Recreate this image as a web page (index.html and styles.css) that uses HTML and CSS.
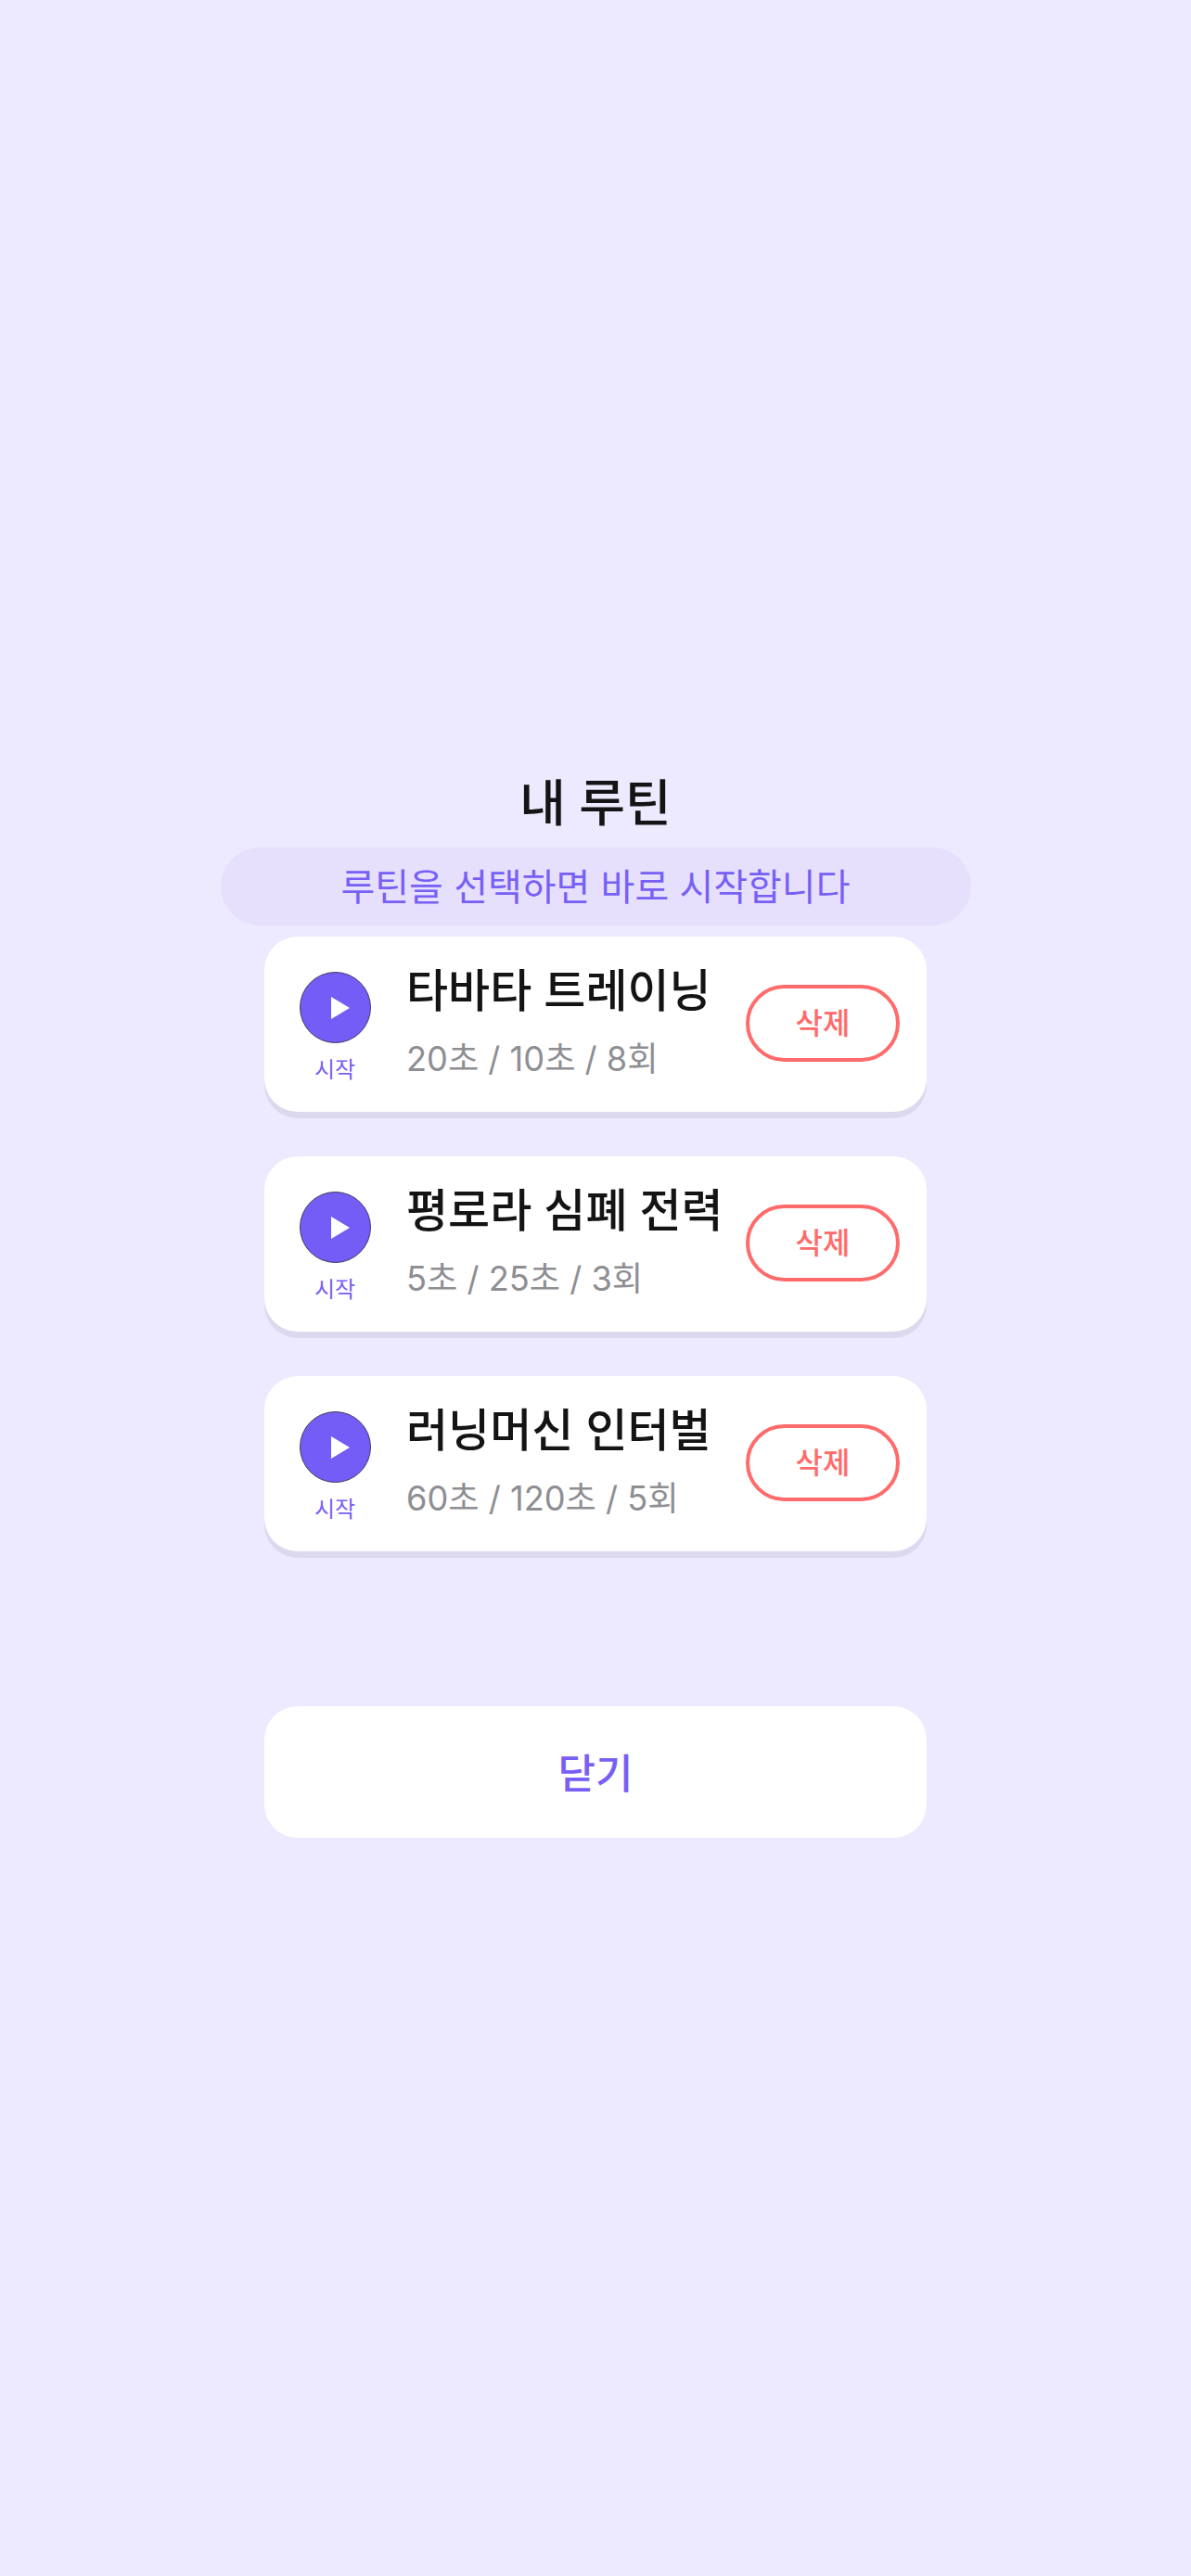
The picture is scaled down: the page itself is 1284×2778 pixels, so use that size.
FILE: index.html
```html
<!DOCTYPE html>
<html lang="ko">
<head>
<meta charset="utf-8">
<title>내 루틴</title>
<link rel="stylesheet" href="styles.css">
</head>
<body>
<main class="sheet">
  <h1 class="title">내 루틴</h1>
  <p class="hint">루틴을 선택하면 바로 시작합니다</p>
  <ul class="list">
    <li class="card">
      <button class="start">
        <span class="disc"><svg class="tri" viewBox="0 0 20 24"><path d="M0 0L20 12L0 24Z"/></svg></span>
        <span class="start-label">시작</span>
      </button>
      <div class="info">
        <div class="name">타바타 트레이닝</div>
        <div class="meta">20초 / 10초 / 8회</div>
      </div>
      <button class="del">삭제</button>
    </li>
    <li class="card">
      <button class="start">
        <span class="disc"><svg class="tri" viewBox="0 0 20 24"><path d="M0 0L20 12L0 24Z"/></svg></span>
        <span class="start-label">시작</span>
      </button>
      <div class="info">
        <div class="name">평로라 심폐 전력</div>
        <div class="meta">5초 / 25초 / 3회</div>
      </div>
      <button class="del">삭제</button>
    </li>
    <li class="card">
      <button class="start">
        <span class="disc"><svg class="tri" viewBox="0 0 20 24"><path d="M0 0L20 12L0 24Z"/></svg></span>
        <span class="start-label">시작</span>
      </button>
      <div class="info">
        <div class="name">러닝머신 인터벌</div>
        <div class="meta">60초 / 120초 / 5회</div>
      </div>
      <button class="del">삭제</button>
    </li>
  </ul>
  <button class="close">닫기</button>
</main>
</body>
</html>
```
FILE: styles.css
```css
* { box-sizing: border-box; }
html, body { margin: 0; padding: 0; }
body {
  width: 1284px;
  height: 2778px;
  background: #ede9fe;
  font-family: "Inter", "Noto Sans CJK KR", sans-serif;
  overflow: hidden;
}
.sheet {
  display: flex;
  flex-direction: column;
  align-items: center;
  padding-top: 828px;
}
.title {
  margin: 0;
  height: 86px;
  line-height: 78px;
  font-size: 54px;
  font-weight: 500;
  color: #141414;
}
.hint {
  margin: 0 0 12px;
  width: 809px;
  height: 84px;
  border-radius: 42px;
  background: #e6e0fd;
  color: #7860f6;
  font-size: 40px;
  line-height: 85px;
  text-align: center;
}
.list {
  list-style: none;
  margin: 0;
  padding: 0;
  display: flex;
  flex-direction: column;
  gap: 48px;
}
.card {
  width: 714px;
  height: 189px;
  background: #fff;
  border-radius: 36px;
  box-shadow: 0 7px 0 #dcd9ee;
  display: flex;
  align-items: center;
  padding: 0 29px 0 38px;
}
button { font-family: inherit; border: 0; background: none; padding: 0; }
.start {
  width: 76px;
  flex: none;
  display: flex;
  flex-direction: column;
  align-items: center;
  gap: 13px;
  margin-top: 9px;
}
.disc {
  width: 77px;
  height: 77px;
  border-radius: 50%;
  background: #745cf6;
  border: 1.5px solid #3e3a5c;
  display: flex;
  align-items: center;
  justify-content: center;
}
.tri { width: 20px; height: 24px; fill: #fff; margin-left: 12px; display: block; }
.start-label { font-size: 24px; line-height: 32px; color: #7860f6; }
.info { flex: 1; margin-left: 39px; min-width: 0; }
.name { font-size: 49px; line-height: 66px; color: #141414; font-weight: 500; white-space: nowrap; margin-top: -7px; }
.meta { font-size: 36.2px; line-height: 50px; color: #8e8e93; margin-top: 15px; white-space: nowrap; }
.del {
  width: 166px;
  height: 83px;
  flex: none;
  border: 4px solid #ff6b6b;
  border-radius: 42px;
  color: #ff6b6b;
  font-size: 32px;
  font-weight: 500;
  line-height: 70px;
  padding-top: 1px;
  background: #fff;
  margin-top: -2px;
}
.close {
  margin-top: 167px;
  width: 714px;
  height: 142px;
  border-radius: 36px;
  background: #fff;
  color: #7860f6;
  font-size: 44px;
  font-weight: 500;
  padding-bottom: 2px;
}
```
